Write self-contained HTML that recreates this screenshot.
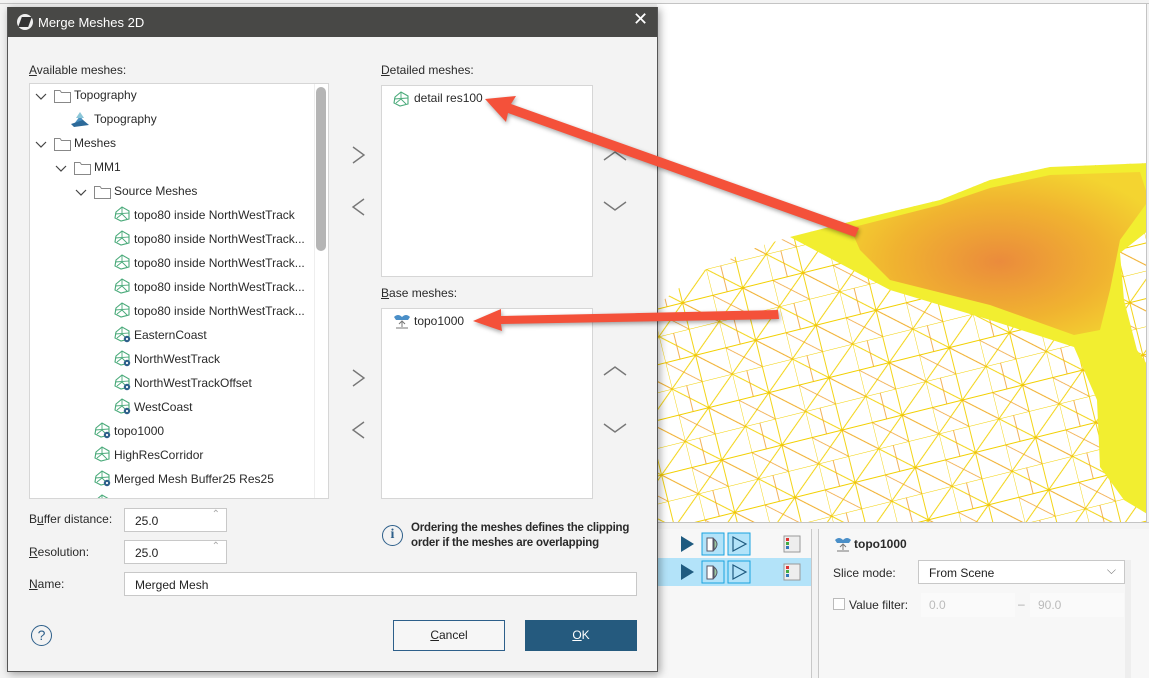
<!DOCTYPE html>
<html><head><meta charset="utf-8"><style>
*{margin:0;padding:0;box-sizing:border-box}
body{width:1149px;height:678px;overflow:hidden;background:#f3f3f3;font-family:"Liberation Sans",sans-serif;font-size:12px;color:#222;position:relative}
.a{position:absolute}
.t{position:absolute;white-space:nowrap;font-size:12px;color:#2a2a2a}
.box{position:absolute;background:#fff;border:1px solid #d6d6d6}
.inp{position:absolute;background:#fff;border:1px solid #c8c8c8;font-size:12px;padding:5px 0 0 10px}
u{text-decoration:underline}
</style></head><body>
<div class="a" style="left:0;top:0;width:1149px;height:678px;background:#f3f3f3"></div>
<div class="a" style="left:0;top:3px;width:1149px;height:1px;background:#c4c4c4"></div>
<div class="a" style="left:657px;top:4px;width:489px;height:518px;background:#fff;overflow:hidden">
<svg width="489" height="518" viewBox="657 4 489 518">
<defs>
<pattern id="wf" width="62" height="54" patternUnits="userSpaceOnUse" patternTransform="rotate(-14)">
<path d="M0 0L62 0M0 27L62 27M0 0L31 27L62 0M0 54L31 27L62 54M31 0L31 54M0 0L0 54" stroke="#f2d000" stroke-width=".9" fill="none"/>
<path d="M0 27L31 54M31 27L62 54M15 0L15 27" stroke="#f0a030" stroke-width=".8" fill="none"/>
</pattern>
<radialGradient id="og" cx="0.5" cy="0.55" r="0.6"><stop offset="0" stop-color="#e86a40"/><stop offset="0.6" stop-color="#f0a030"/><stop offset="1" stop-color="#f4cc30"/></radialGradient>
</defs>
<path d="M657 305L700 272L760 246L790 237L857 220L940 200L990 180L1050 167L1149 163L1149 522L657 522Z" fill="url(#wf)"/>
<path d="M790 237L857 220L940 200L990 180L1050 167L1149 163L1149 230L1120 253L1124 300L1137 350L1149 367L1149 515L1124 500L1100 467L1097 400L1074 347L990 320L890 290Z" fill="#f2ee30"/>
<path d="M850 228L940 205L990 188L1050 175L1140 172L1149 200L1120 240L1110 290L1100 330L1074 335L990 305L890 280L860 250Z" fill="url(#og)" opacity="0.75"/>
</svg>
</div>
<div class="a" style="left:1146px;top:3px;width:1px;height:520px;background:#c4c4c4"></div>
<div class="a" style="left:657px;top:522px;width:492px;height:1px;background:#c4c4c4"></div>
<div class="a" style="left:657px;top:529px;width:155px;height:149px;background:#f7f7f7;border-right:1px solid #c8c8c8"></div>
<div class="a" style="left:657px;top:558px;width:154px;height:28px;background:#b3e3f9"></div>
<svg class="a" style="left:657px;top:530px" width="154" height="60">
<g><path d="M24 6L24 22L37 14Z" fill="#1f5b80"/><rect x="45" y="3" width="22" height="22" fill="#b3e3f9" stroke="#1aa3e0"/><path d="M50 8L56 8L56 21L50 21Z" fill="#fff" stroke="#556"/><path d="M57 9Q63 14 57 20Z" fill="#9cc9a0" stroke="#556"/><rect x="71" y="3" width="22" height="22" fill="#b3e3f9" stroke="#1aa3e0"/><path d="M76 7L76 21L89 14Z" fill="none" stroke="#1f5b80" stroke-width="1.2"/><rect x="127" y="6" width="16" height="16" fill="#eee" stroke="#999"/><rect x="129" y="8" width="3" height="3" fill="#d33"/><rect x="129" y="12" width="3" height="3" fill="#4a4"/><rect x="129" y="16" width="3" height="3" fill="#37b"/></g>
<g transform="translate(0,28)"><path d="M24 6L24 22L37 14Z" fill="#1f5b80"/><rect x="45" y="3" width="22" height="22" fill="#b3e3f9" stroke="#1aa3e0"/><path d="M50 8L56 8L56 21L50 21Z" fill="#fff" stroke="#556"/><path d="M57 9Q63 14 57 20Z" fill="#9cc9a0" stroke="#556"/><rect x="71" y="3" width="22" height="22" fill="#b3e3f9" stroke="#1aa3e0"/><path d="M76 7L76 21L89 14Z" fill="none" stroke="#1f5b80" stroke-width="1.2"/><rect x="127" y="6" width="16" height="16" fill="#eee" stroke="#999"/><rect x="129" y="8" width="3" height="3" fill="#d33"/><rect x="129" y="12" width="3" height="3" fill="#4a4"/><rect x="129" y="16" width="3" height="3" fill="#37b"/></g>
</svg>
<div class="a" style="left:818px;top:529px;width:331px;height:149px;background:#f7f7f7;border-left:1px solid #c8c8c8"></div>
<div class="a" style="left:1125px;top:560px;width:6px;height:118px;background:#eee"></div>
<svg class="a" style="left:834px;top:536px" width="18" height="16"><path d="M1 4Q5 0 9 4Q13 0 17 4L15 7L3 7Z" fill="#4a8fc8"/><path d="M9 8L9 14M6 11L9 8L12 11M3 15L15 15" stroke="#777" fill="none"/></svg>
<div class="t" style="left:854px;top:537px;font-weight:bold">topo1000</div>
<div class="t" style="left:833px;top:566px">Slice mode:</div>
<div class="inp" style="left:918px;top:560px;width:207px;height:24px">From Scene<span style="position:absolute;right:8px;top:2px;color:#777">⌵</span></div>
<div class="a" style="left:833px;top:598px;width:12px;height:12px;border:1px solid #bbb;background:#fff"></div>
<div class="t" style="left:849px;top:598px">Value filter:</div>
<div class="a" style="left:921px;top:593px;width:94px;height:24px;background:#fafafa;color:#bbb;padding:5px 8px;font-size:12px">0.0</div>
<div class="a" style="left:1018px;top:597px;color:#aaa">–</div>
<div class="a" style="left:1030px;top:593px;width:94px;height:24px;background:#fafafa;color:#bbb;padding:5px 8px;font-size:12px">90.0</div>

<div class="a" style="left:7px;top:7px;width:651px;height:665px;background:#f3f3f3;border:1px solid #555;box-shadow:2px 2px 8px rgba(0,0,0,.35)"></div>
<div class="a" style="left:8px;top:7px;width:649px;height:30px;background:#484846"></div>
<div class="a" style="left:17px;top:14px;width:16px;height:16px;border-radius:8px;background:#eee"></div>
<div class="a" style="left:20px;top:17px;width:10px;height:10px;background:#333;transform:skewX(-20deg)"></div>
<div class="t" style="left:38px;top:15px;color:#fff;font-size:13px">Merge Meshes 2D</div>
<div class="a" style="left:633px;top:9px;color:#fff;font-size:18px">✕</div>

<div class="t" style="left:29px;top:63px"><u>A</u>vailable meshes:</div>
<div class="box" style="left:29px;top:83px;width:300px;height:416px;overflow:hidden">
<div class="a" style="left:284px;top:0;width:15px;height:416px;background:#fff;border-left:1px solid #eee"></div>
<div class="a" style="left:286px;top:3px;width:10px;height:164px;background:#b5b5b5;border-radius:5px"></div>
</div>
<svg class="a" style="left:30px;top:84px" width="284" height="414">
<defs>
<g id="m"><path d="M2 6L8 1L15 5L15 13L7 15L1 12Z" fill="#fff" stroke="#4aaa7a" stroke-width="1.1"/><path d="M1 8L15 7M3 12L8 8L13 13M8 1L8 8" stroke="#4aaa7a" stroke-width=".9" fill="none"/></g>
<g id="g"><circle cx="13" cy="13" r="3.2" fill="#2d5f8a"/><circle cx="13" cy="13" r="1.1" fill="#fff"/></g>
<g id="f"><path d="M0.5 3.5L6 3.5L7.5 5.5L16.5 5.5L16.5 15.5L0.5 15.5Z" fill="#fff" stroke="#888"/></g>
<g id="c"><path d="M0 0L5 5L10 0" fill="none" stroke="#444" stroke-width="1.2"/></g>
</defs>
<use href="#c" x="6" y="10"/><use href="#f" x="24" y="3"/>
<path d="M44 40L50 32L56 40Z" fill="#4a90c0"/><path d="M50 28L54 34L46 34Z" fill="#8bc6d8"/><path d="M41 40L53 36L59 41L44 43Z" fill="#2d6a9a"/>
<use href="#c" x="6" y="58"/><use href="#f" x="24" y="51"/>
<use href="#c" x="26" y="82"/><use href="#f" x="44" y="75"/>
<use href="#c" x="46" y="106"/><use href="#f" x="64" y="99"/>
<g fill="none"><use href="#m" x="84" y="122"/><use href="#m" x="84" y="146"/><use href="#m" x="84" y="170"/><use href="#m" x="84" y="194"/><use href="#m" x="84" y="218"/>
<use href="#m" x="84" y="242"/><use href="#g" x="84" y="242"/><use href="#m" x="84" y="266"/><use href="#g" x="84" y="266"/><use href="#m" x="84" y="290"/><use href="#g" x="84" y="290"/><use href="#m" x="84" y="314"/><use href="#g" x="84" y="314"/>
<use href="#m" x="64" y="338"/><use href="#g" x="64" y="338"/><use href="#m" x="64" y="362"/><use href="#m" x="64" y="386"/><use href="#g" x="64" y="386"/><use href="#m" x="64" y="410"/></g>
</svg>
<div class="t" style="left:74px;top:88px">Topography</div>
<div class="t" style="left:94px;top:112px">Topography</div>
<div class="t" style="left:74px;top:136px">Meshes</div>
<div class="t" style="left:94px;top:160px">MM1</div>
<div class="t" style="left:114px;top:184px">Source Meshes</div>
<div class="t" style="left:134px;top:208px">topo80 inside NorthWestTrack</div>
<div class="t" style="left:134px;top:232px">topo80 inside NorthWestTrack...</div>
<div class="t" style="left:134px;top:256px">topo80 inside NorthWestTrack...</div>
<div class="t" style="left:134px;top:280px">topo80 inside NorthWestTrack...</div>
<div class="t" style="left:134px;top:304px">topo80 inside NorthWestTrack...</div>
<div class="t" style="left:134px;top:328px">EasternCoast</div>
<div class="t" style="left:134px;top:352px">NorthWestTrack</div>
<div class="t" style="left:134px;top:376px">NorthWestTrackOffset</div>
<div class="t" style="left:134px;top:400px">WestCoast</div>
<div class="t" style="left:114px;top:424px">topo1000</div>
<div class="t" style="left:114px;top:448px">HighResCorridor</div>
<div class="t" style="left:114px;top:472px">Merged Mesh Buffer25 Res25</div>

<svg class="a" style="left:340px;top:140px" width="300" height="310" fill="none" stroke="#777" stroke-width="1.4">
<path d="M13 7L24 15L13 23"/><path d="M24 59L13 67L24 75"/>
<path d="M13 230L24 238L13 246"/><path d="M24 282L13 290L24 298"/>
<path d="M264 20L275 12L286 20"/><path d="M264 62L275 70L286 62"/>
<path d="M264 235L275 227L286 235"/><path d="M264 284L275 292L286 284"/>
</svg>

<div class="t" style="left:381px;top:63px"><u>D</u>etailed meshes:</div>
<div class="box" style="left:381px;top:85px;width:212px;height:192px"></div>
<svg class="a" style="left:393px;top:90px" width="18" height="18"><use href="#m" x="0" y="1"/></svg>
<div class="t" style="left:414px;top:91px">detail res100</div>
<div class="t" style="left:381px;top:286px"><u>B</u>ase meshes:</div>
<div class="box" style="left:381px;top:308px;width:212px;height:191px"></div>
<svg class="a" style="left:393px;top:313px" width="18" height="16"><path d="M1 4Q5 0 9 4Q13 0 17 4L15 7L3 7Z" fill="#4a8fc8"/><path d="M9 8L9 14M6 11L9 8L12 11M3 15L15 15" stroke="#777" fill="none"/></svg>
<div class="t" style="left:414px;top:314px">topo1000</div>

<div class="t" style="left:29px;top:512px">B<u>u</u>ffer distance:</div>
<div class="inp" style="left:124px;top:508px;width:103px;height:24px">25.0<span style="position:absolute;right:6px;top:0;color:#aaa;font-size:10px">⌃</span></div>
<div class="t" style="left:29px;top:545px"><u>R</u>esolution:</div>
<div class="inp" style="left:124px;top:540px;width:103px;height:24px">25.0<span style="position:absolute;right:6px;top:0;color:#aaa;font-size:10px">⌃</span></div>
<div class="t" style="left:29px;top:577px"><u>N</u>ame:</div>
<div class="inp" style="left:124px;top:572px;width:513px;height:24px">Merged Mesh</div>
<div class="a" style="left:382px;top:525px;width:21px;height:21px;border:1.5px solid #2d5f8a;border-radius:50%;color:#2d5f8a;font-weight:bold;font-family:'Liberation Serif',serif;font-size:14px;text-align:center;line-height:18px">i</div>
<div class="t" style="left:411px;top:521px;font-weight:bold;font-size:11.5px;line-height:15px;letter-spacing:-0.2px">Ordering the meshes defines the clipping<br>order if the meshes are overlapping</div>
<div class="a" style="left:31px;top:625px;width:21px;height:21px;border:1.5px solid #2d5f8a;border-radius:50%;color:#2d5f8a;font-size:14px;text-align:center;line-height:18px">?</div>
<div class="a" style="left:393px;top:620px;width:112px;height:31px;border:1px solid #2d5f8a;background:#f6f6f6;text-align:center;line-height:29px;font-size:12px"><u>C</u>ancel</div>
<div class="a" style="left:525px;top:620px;width:112px;height:31px;background:#255a7e;color:#fff;text-align:center;line-height:31px;font-size:12px"><u>O</u>K</div>

<svg class="a" style="left:0;top:0" width="1149" height="678">
<g fill="#f4513a" stroke="none" style="filter:drop-shadow(1px 2px 2px rgba(0,0,0,.35))">
<path d="M485 99L516 96L511 104L859 228L855 237L508 113L506 122Z"/>
<path d="M473 321L501 309L501 316L778 310L779 319L501 324L502 331Z"/>
</g>
</svg>
</body></html>
